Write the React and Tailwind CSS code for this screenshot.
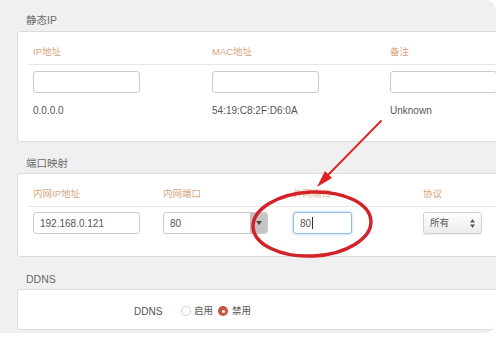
import React from 'react'

const font = { fontFamily: '"Liberation Sans", Arial, "Noto Sans CJK SC", sans-serif' }

function Title({ children, className }) {
  return <div className={`pl-[9px] text-[10.5px] leading-[14px] text-[#6a6a6a] ${className}`}>{children}</div>
}

function TextInput({ value, className = '' }) {
  return (
    <div className={`h-[22px] flex items-center rounded-[3px] border border-[#ccc] bg-white px-[6px] text-[10px] text-[#555] ${className}`}>
      {value}
    </div>
  )
}

function Radio({ checked }) {
  return checked ? (
    <span className="flex h-[10px] w-[10px] items-center justify-center rounded-full bg-[#c9553f]">
      <span className="h-[3px] w-[3px] rounded-full bg-white" />
    </span>
  ) : (
    <span className="h-[10px] w-[10px] rounded-full border border-[#d0d0d0] bg-white" />
  )
}

export default function App() {
  return (
    <div className="relative h-[343px] w-[503px] bg-white" style={font}>
      <div className="h-[333px] w-[496px] overflow-hidden rounded-r-[10px] bg-[#f0f0f0]">
        <div className="pl-[17px]">
          <Title className="pt-[13px] pb-[4px]">静态IP</Title>
          <div className="h-[111px] w-[490px] rounded-[3px] border border-[#dcdcdc] bg-white">
            <div className="ml-[10px] flex border-b border-[#e6e6e6] pt-[13px] pb-[5px] pl-[5px] text-[9.5px] leading-[14px] text-[#d8a67c]">
              <div className="w-[179px]">IP地址</div>
              <div className="w-[178px]">MAC地址</div>
              <div>备注</div>
            </div>
            <div className="mt-[6px] flex pl-[15px]">
              <div className="w-[179px]"><TextInput className="w-[107px]" /></div>
              <div className="w-[178px]"><TextInput className="w-[107px]" /></div>
              <div><TextInput className="w-[107px]" /></div>
            </div>
            <div className="mt-[11px] flex pl-[15px] text-[10px] leading-[14px] text-[#555]">
              <div className="w-[179px]">0.0.0.0</div>
              <div className="w-[178px]">54:19:C8:2F:D6:0A</div>
              <div>Unknown</div>
            </div>
          </div>

          <Title className="pt-[14px] pb-[3px]">端口映射</Title>
          <div className="h-[84px] w-[490px] rounded-[3px] border border-[#dcdcdc] bg-white">
            <div className="ml-[10px] flex border-b border-[#e6e6e6] pt-[13px] pb-[5px] pl-[5px] text-[9.5px] leading-[14px] text-[#d8a67c]">
              <div className="w-[130px]">内网IP地址</div>
              <div className="w-[130px]">内网端口</div>
              <div className="w-[130px] text-[#e4bfa0]">外网端口</div>
              <div>协议</div>
            </div>
            <div className="mt-[5px] flex pl-[15px]">
              <div className="w-[130px]"><TextInput className="w-[107px]" value="192.168.0.121" /></div>
              <div className="w-[130px]">
                <div className="flex h-[22px] w-[105px] overflow-hidden rounded-[3px] border border-[#ccc] bg-white text-[10px] text-[#555]">
                  <div className="flex flex-1 items-center px-[6px]">80</div>
                  <div className="flex w-[17px] items-center justify-center bg-[#c4c4c4]">
                    <svg width="6" height="4" viewBox="0 0 6 4"><path d="M0 0h6L3 4z" fill="#444" /></svg>
                  </div>
                </div>
              </div>
              <div className="w-[130px]">
                <div className="flex h-[22px] w-[59px] items-center rounded-[3px] border border-[#8fbde6] bg-white px-[6px] text-[10px] text-[#555] shadow-[0_0_3px_rgba(102,175,233,0.6)]">
                  80<span className="ml-[1px] h-[12px] w-px bg-[#333]" />
                </div>
              </div>
              <div>
                <div className="flex h-[22px] w-[59px] items-center justify-between rounded-[3px] border border-[#d0d0d0] bg-gradient-to-b from-white to-[#ececec] px-[6px] text-[9.5px] text-[#555] shadow-[0_1px_1px_rgba(0,0,0,0.08)]">
                  <span>所有</span>
                  <svg width="5" height="9" viewBox="0 0 5 9"><path d="M0 3.5L2.5 0 5 3.5z M0 5.5L2.5 9 5 5.5z" fill="#555" /></svg>
                </div>
              </div>
            </div>
          </div>

          <Title className="pt-[15px] pb-[3px]">DDNS</Title>
          <div className="flex h-[41px] w-[490px] items-center rounded-[3px] border border-[#dcdcdc] bg-white pt-[3px] pl-[116px] text-[10px] text-[#555]">
            <span className="w-[47px]">DDNS</span>
            <Radio />
            <span className="ml-[3px] mr-[5px] text-[9.5px]">启用</span>
            <Radio checked />
            <span className="ml-[4px] text-[9.5px]">禁用</span>
          </div>
        </div>
      </div>

      <svg className="pointer-events-none absolute left-0 top-0" width="503" height="343" viewBox="0 0 503 343">
        <line x1="381" y1="121" x2="327" y2="176" stroke="#e21f1f" strokeWidth="1.8" strokeLinecap="round" />
        <polygon points="317,187 332,178 325,171" fill="#e21f1f" />
        <ellipse cx="312" cy="224" rx="59" ry="32" fill="none" stroke="#d3222a" strokeWidth="3.5" transform="rotate(-3 312 224)" />
      </svg>
    </div>
  )
}
